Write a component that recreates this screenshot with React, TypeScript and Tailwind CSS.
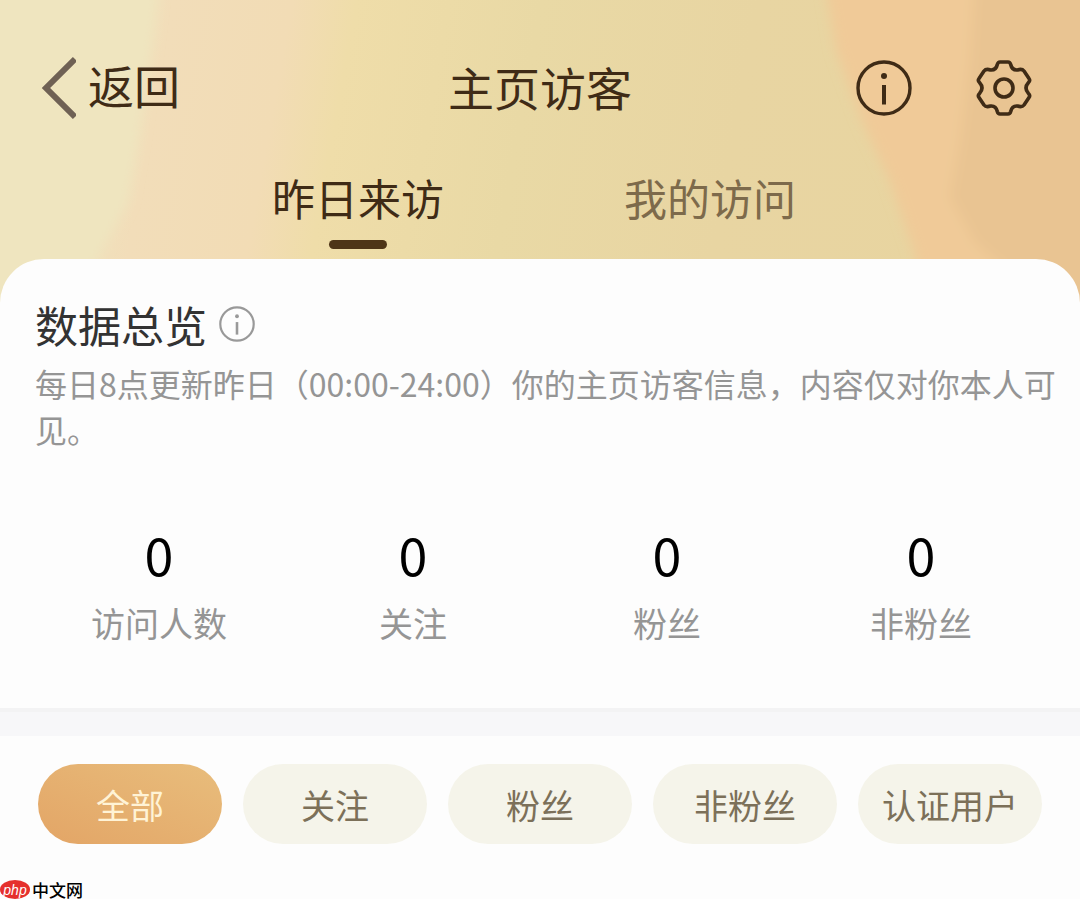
import React from "react";

const FONT = "font-['Noto_Sans_CJK_SC',sans-serif]";

const stats = [
  { label: "访问人数", value: 0 },
  { label: "关注", value: 0 },
  { label: "粉丝", value: 0 },
  { label: "非粉丝", value: 0 },
];

const filters = ["全部", "关注", "粉丝", "非粉丝", "认证用户"];

function HeaderBackdrop() {
  return (
    <svg
      className="absolute inset-0 h-full w-full"
      viewBox="0 0 1080 300"
      preserveAspectRatio="none"
      aria-hidden="true"
    >
      <defs>
        <linearGradient id="sand" x1="0" y1="0" x2="1" y2="0.05">
          <stop offset="0" stopColor="#efe5bf" />
          <stop offset="0.11" stopColor="#efe2bc" />
          <stop offset="0.16" stopColor="#f2ddb9" />
          <stop offset="0.27" stopColor="#f2dcb5" />
          <stop offset="0.33" stopColor="#efdda9" />
          <stop offset="0.5" stopColor="#e9d9a5" />
          <stop offset="0.7" stopColor="#e8d5a2" />
          <stop offset="1" stopColor="#e8d49f" />
        </linearGradient>
        <filter id="soft" x="-10%" y="-10%" width="120%" height="120%">
          <feGaussianBlur stdDeviation="6" />
        </filter>
      </defs>
      <rect width="1080" height="300" fill="url(#sand)" />
      <g filter="url(#soft)">
        <path d="M-20 -20H160L150 60L140 130L128 200L95 260L60 320H-20Z" fill="#efe5bf" />
        <path d="M824 -20L836 50L862 120L890 180L914 250L930 320H1110V-20Z" fill="#f0ca98" />
        <path d="M975 -20L970 60L960 140L950 195L975 240L1010 270L1030 320H1110V-20Z" fill="#e9c492" />
      </g>
    </svg>
  );
}

function InfoIcon({ className }: { className: string }) {
  return (
    <svg className={className} viewBox="0 0 56 56" fill="none" stroke="currentColor" aria-hidden="true">
      <circle cx="28" cy="28" r="26" strokeWidth="3.4" />
      <path d="M28 25V44.5" strokeWidth="4" />
      <circle cx="28" cy="16" r="3" fill="currentColor" stroke="none" />
    </svg>
  );
}

function GearIcon() {
  return (
    <svg
      className="size-14"
      viewBox="0 0 56 56"
      fill="none"
      stroke="currentColor"
      strokeWidth="3.6"
      strokeLinejoin="round"
      aria-hidden="true"
    >
      <path d="M24 2H32Q34 2 34.7 4.500Q36 10.500 41.500 10Q46 8.500 48 11L53 18.500Q54.500 20.500 52.500 22.500Q47.500 28 52.500 33.500Q54.500 35.500 53 37.500L48 45Q46 47.500 41.500 46Q36 45.500 34.700 51.500Q34 54 32 54H24Q22 54 21.300 51.500Q20 45.500 14.500 46Q10 47.500 8 45L3 37.500Q1.500 35.500 3.500 33.500Q8.500 28 3.500 22.500Q1.500 20.500 3 18.500L8 11Q10 8.500 14.500 10Q20 10.500 21.300 4.500Q22 2 24 2Z" />
      <circle cx="28" cy="28" r="9" />
    </svg>
  );
}

export default function App() {
  return (
    <div className={`min-h-screen bg-[#fdfdfd] text-[#333] ${FONT}`}>
      <div className="relative">
        <HeaderBackdrop />
        <header className="relative text-[#3f2b16]">
          <div className="grid grid-cols-[1fr_auto_1fr] items-start px-10 pt-14">
            <button type="button" className="flex items-start gap-3 justify-self-start">
              <svg className="h-16 w-9" viewBox="0 0 36 64" fill="none" stroke="#6f6154" strokeWidth="6" aria-hidden="true">
                <path d="M35 3L6 32L35 61" />
              </svg>
              <span className="text-[46px] leading-[56px]">返回</span>
            </button>
            <h1 className="text-[46px] leading-[60px]">主页访客</h1>
            <div className="flex items-center gap-16 justify-self-end pt-1 pr-2">
              <button type="button" aria-label="说明">
                <InfoIcon className="size-14" />
              </button>
              <button type="button" aria-label="设置">
                <GearIcon />
              </button>
            </div>
          </div>
          <nav className="flex justify-center gap-[180px] pt-12 pr-3 text-[43px] leading-[58px]">
            <button type="button" className="flex flex-col items-center">
              昨日来访
              <span className="mt-[14px] h-[9px] w-[58px] rounded-full bg-[#4e3517]" />
            </button>
            <button type="button" className="self-start text-[#7d6a4b]">
              我的访问
            </button>
          </nav>
        </header>
        <div className="relative mt-[10px] h-11 rounded-t-[44px] bg-[#fdfdfd]" />
      </div>

      <main>
        <section className="pb-[58px]">
          <div className="flex items-center gap-3 px-[35px]">
            <h2 className="text-[43px] leading-[42px]">数据总览</h2>
            <button type="button" aria-label="数据说明" className="text-[#999]">
              <InfoIcon className="size-9" />
            </button>
          </div>
          <p className="mt-[15px] pr-5 pl-[35px] text-[32px] leading-[46px] text-[#959595]">
            每日8点更新昨日（00:00-24:00）你的主页访客信息，内容仅对你本人可见。
          </p>
          <dl className="mt-[60px] grid grid-cols-4 px-8 text-center">
            {stats.map((s) => (
              <div key={s.label} className="flex flex-col-reverse">
                <dt className="text-[34px] leading-[54px] text-[#959595]">{s.label}</dt>
                <dd className="text-[52px] leading-[84px] text-black">{s.value}</dd>
              </div>
            ))}
          </dl>
        </section>
        <div className="h-7 border-t-4 border-[#f3f3f4] bg-[#f7f7f9]" />
        <section className="grid grid-cols-5 gap-[21px] px-[38px] pt-7 pb-9">
          {filters.map((f, i) => (
            <button
              key={f}
              type="button"
              aria-pressed={i === 0}
              className={
                i === 0
                  ? "h-20 rounded-full bg-linear-to-tr from-[#e3a566] to-[#e8bd7c] text-[34px] text-[#fff3d6]"
                  : "h-20 rounded-full bg-[#f5f4ea] text-[34px] text-[#7c7059]"
              }
            >
              {f}
            </button>
          ))}
        </section>
      </main>

      <footer className="flex items-center gap-[2px] text-black">
        <span className="flex h-[19px] w-[30px] items-center justify-center rounded-[50%] bg-[#e5302d] font-['Liberation_Sans',sans-serif] text-[14px] leading-none text-white italic">
          php
        </span>
        <span className="text-[17px] leading-[19px] font-medium">中文网</span>
      </footer>
    </div>
  );
}
